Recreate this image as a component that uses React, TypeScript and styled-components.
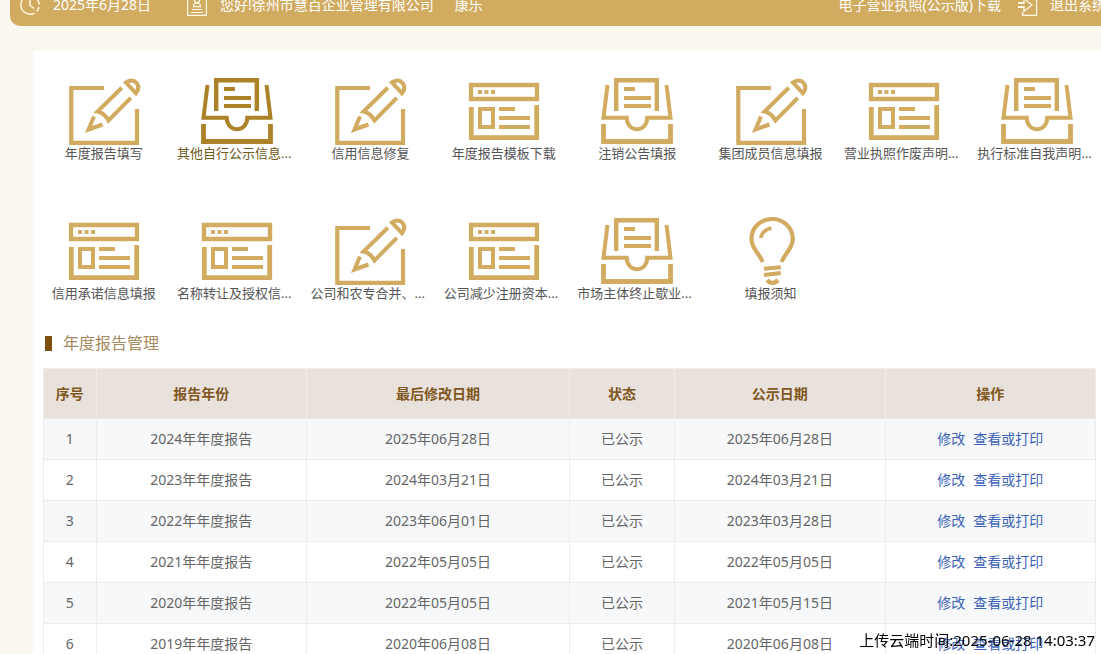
import React from "react";
import styled, { createGlobalStyle } from "styled-components";

const GlobalStyle = createGlobalStyle`
  * { box-sizing: border-box; }
  body {
    margin: 0;
    background: #fbf8ef;
    font-family: "Noto Sans", "Noto Sans CJK SC", sans-serif;
    font-size: 14px;
    color: #666;
  }
`;

const Page = styled.div`
  height: 100vh;
  overflow: hidden;
`;

const TopBar = styled.header`
  display: flex;
  align-items: center;
  height: 46px;
  margin: -20px 0 0 10px;
  padding: 4px 0 0 10px;
  border-radius: 0 0 0 10px;
  background: #d1ab60;
  color: #fff;
  line-height: 20px;
  white-space: nowrap;
`;

const BarGroup = styled.div<{ $end?: boolean }>`
  display: flex;
  align-items: center;
  gap: 13px;
  margin-left: ${(p) => (p.$end ? "auto" : "0")};
  margin-right: ${(p) => (p.$end ? "-5px" : "36px")};
`;

const BarLink = styled.a`
  display: flex;
  align-items: center;
  gap: 12px;
  margin-left: 4px;
  color: inherit;
  text-decoration: none;
`;

const UserName = styled.span`
  margin-left: 8px;
`;

const BarIcon = styled.svg`
  flex: none;
  fill: none;
  stroke: #fff8e6;
`;

const Panel = styled.main`
  margin: 25px 0 0 33px;
  padding: 26px 5px 24px 10px;
  background: #fff;
`;

const TileGrid = styled.nav`
  display: grid;
  grid-template-columns: repeat(8, 1fr);
  row-gap: 56px;
  margin: 0 -8px 0 -6px;
`;

const Tile = styled.a<{ $active?: boolean }>`
  display: flex;
  flex-direction: column;
  align-items: center;
  color: ${(p) => (p.$active ? "#6f5a1c" : "#555")};
  text-decoration: none;

  svg {
    fill: none;
    stroke: ${(p) => (p.$active ? "#ac8229" : "#d1ab60")};
    stroke-width: 4;
  }
`;

const TileLabel = styled.span<{ $long: boolean }>`
  width: 120px;
  font-size: 13px;
  line-height: 16px;
  text-align: ${(p) => (p.$long ? "left" : "center")};
  white-space: nowrap;
`;

const SectionTitle = styled.h2`
  display: flex;
  align-items: center;
  gap: 11px;
  margin: 30px 0 13px 2px;
  font-size: 16px;
  font-weight: 400;
  line-height: 24px;
  color: #a58a5f;

  &::before {
    content: "";
    width: 7px;
    height: 15px;
    background: #7f4f0c;
  }
`;

const Table = styled.table`
  width: 100%;
  table-layout: fixed;
  border-collapse: collapse;
  text-align: center;
  line-height: 20px;
`;

const Column = styled.col<{ $share: number }>`
  width: ${(p) => p.$share}%;
`;

const HeadCell = styled.th`
  height: 50px;
  padding: 0;
  border: 1px solid #f0ece8;
  background: #e9e2dc;
  color: #80571e;
  font-weight: 700;
`;

const Row = styled.tr`
  background: #fff;

  &:nth-child(odd) {
    background: #f6f8fa;
  }
`;

const Cell = styled.td`
  height: 41px;
  padding: 0;
  border: 1px solid #ebeced;
`;

const ActionLink = styled.a`
  color: #3d63b8;
  text-decoration: none;

  & + & {
    margin-left: 8px;
  }
`;

const UploadStamp = styled.div`
  position: fixed;
  right: 6px;
  bottom: 4px;
  font-size: 15px;
  line-height: 20px;
  color: #000;
`;

type IconKind = "edit" | "inbox" | "report" | "bulb";

const drawings: Record<IconKind, React.ReactNode> = {
  edit: (
    <>
      <path d="M37 11H4.3V65.8H70V32" strokeWidth="4.2" />
      <path d="M54.8 10.7L30.5 34.5Q37.5 36 41.5 43.5L63.8 20.8" strokeWidth="4" />
      <path d="M27 39.5L21.5 52.5L35.5 47.5" strokeWidth="4" />
      <path d="M59 5.5Q65.5 1.2 69.6 6Q73.3 11 69 16.2Z" strokeWidth="4" />
    </>
  ),
  inbox: (
    <>
      <path d="M16.2 34V3.2H56.8V34" strokeWidth="4.4" />
      <path d="M24 12H35M24 21H51M24 29H51" />
      <path d="M7.5 8L3.5 40.8H26.7C27 56 47 56 47.3 40.8H70.5L66.5 8" strokeWidth="4" />
      <path d="M3.5 47V64.5H70.5V47" strokeWidth="4.8" />
    </>
  ),
  report: (
    <>
      <path d="M4 8H70V22H4Z" strokeWidth="4.4" />
      <path d="M11 15H15M17.5 15H21.5M24 15H28" />
      <path d="M4.3 30V60.7H69.7V28" strokeWidth="4.8" />
      <path d="M13 32H26V50H13Z" />
      <path d="M32 32H48M32 41H63M32 50H63" />
    </>
  ),
  bulb: (
    <>
      <path d="M28.6 45C26 37 17.4 32 17.4 22A20.7 20 0 0 1 58.8 22C58.8 32 50 37 47.6 45" strokeWidth="4.2" />
      <path d="M26.8 21Q28 13 37.5 11" strokeWidth="3.6" />
      <path d="M30 51.8L46.8 50.2M30 58L46.8 56" />
      <path d="M33 63Q38.5 69 44 63" strokeWidth="4.4" />
    </>
  ),
};

const tiles: { label: string; icon: IconKind; active?: boolean }[] = [
  { label: "年度报告填写", icon: "edit" },
  { label: "其他自行公示信息...", icon: "inbox", active: true },
  { label: "信用信息修复", icon: "edit" },
  { label: "年度报告模板下载", icon: "report" },
  { label: "注销公告填报", icon: "inbox" },
  { label: "集团成员信息填报", icon: "edit" },
  { label: "营业执照作废声明...", icon: "report" },
  { label: "执行标准自我声明...", icon: "inbox" },
  { label: "信用承诺信息填报", icon: "report" },
  { label: "名称转让及授权信...", icon: "report" },
  { label: "公司和农专合并、...", icon: "edit" },
  { label: "公司减少注册资本...", icon: "report" },
  { label: "市场主体终止歇业...", icon: "inbox" },
  { label: "填报须知", icon: "bulb" },
];

const columns = [
  { title: "序号", share: 5 },
  { title: "报告年份", share: 20 },
  { title: "最后修改日期", share: 25 },
  { title: "状态", share: 10 },
  { title: "公示日期", share: 20 },
  { title: "操作", share: 20 },
];

const reports = [
  { year: 2024, modified: "2025年06月28日", published: "2025年06月28日" },
  { year: 2023, modified: "2024年03月21日", published: "2024年03月21日" },
  { year: 2022, modified: "2023年06月01日", published: "2023年03月28日" },
  { year: 2021, modified: "2022年05月05日", published: "2022年05月05日" },
  { year: 2020, modified: "2022年05月05日", published: "2021年05月15日" },
  { year: 2019, modified: "2020年06月08日", published: "2020年06月08日" },
];

export default function App() {
  return (
    <Page>
      <GlobalStyle />
      <TopBar>
        <BarGroup>
          <BarIcon width="20" height="20" viewBox="0 0 20 20" strokeWidth="1.4">
            <path d="M14 1.4A9.3 9.3 0 1 0 14.5 18.1M16.5 16.6A9.3 9.3 0 0 0 19 12M19.3 9.5A9.3 9.3 0 0 0 17 4" />
            <path d="M10 4V10.5L14 13.5" />
          </BarIcon>
          <span>2025年6月28日</span>
        </BarGroup>
        <BarGroup>
          <BarIcon width="20" height="22" viewBox="0 0 20 22" strokeWidth="1.2">
            <path d="M.6 .6H19.4V21.4H.6Z" />
            <circle cx="10" cy="6" r="2.6" />
            <path d="M6.5 12.6Q6.5 9 10 9T13.5 12.6Z" />
            <path d="M5 15.5H15M4 18.5H16" />
          </BarIcon>
          <span>您好!徐州市慧百企业管理有限公司</span>
          <UserName>康乐</UserName>
        </BarGroup>
        <BarGroup $end>
          <BarLink href="#license">电子营业执照(公示版)下载</BarLink>
          <BarLink href="#logout">
            <BarIcon width="20" height="22" viewBox="0 0 20 22" strokeWidth="1.3">
              <path d="M4.6 4V.6H18.6V21.4H4.6V18" />
              <path d="M6 8.5V4.5L14 11L6 17.5V13.5" />
              <path d="M0 9H6.6M0 13H6.6" strokeWidth="1.8" />
            </BarIcon>
            退出系统
          </BarLink>
        </BarGroup>
      </TopBar>
      <Panel>
        <TileGrid>
          {tiles.map((t) => (
            <Tile key={t.label} href="#tile" $active={t.active}>
              <svg width="74" height="68" viewBox="0 0 74 68">
                {drawings[t.icon]}
              </svg>
              <TileLabel $long={t.label.endsWith("...")}>{t.label}</TileLabel>
            </Tile>
          ))}
        </TileGrid>
        <SectionTitle>年度报告管理</SectionTitle>
        <Table>
          <colgroup>
            {columns.map((c) => (
              <Column key={c.title} $share={c.share} />
            ))}
          </colgroup>
          <thead>
            <tr>
              {columns.map((c) => (
                <HeadCell key={c.title} scope="col">
                  {c.title}
                </HeadCell>
              ))}
            </tr>
          </thead>
          <tbody>
            {reports.map((r, i) => (
              <Row key={r.year}>
                <Cell>{i + 1}</Cell>
                <Cell>{r.year}年年度报告</Cell>
                <Cell>{r.modified}</Cell>
                <Cell>已公示</Cell>
                <Cell>{r.published}</Cell>
                <Cell>
                  <ActionLink href="#edit">修改</ActionLink>
                  <ActionLink href="#view">查看或打印</ActionLink>
                </Cell>
              </Row>
            ))}
          </tbody>
        </Table>
      </Panel>
      <UploadStamp>上传云端时间:2025-06-28 14:03:37</UploadStamp>
    </Page>
  );
}
